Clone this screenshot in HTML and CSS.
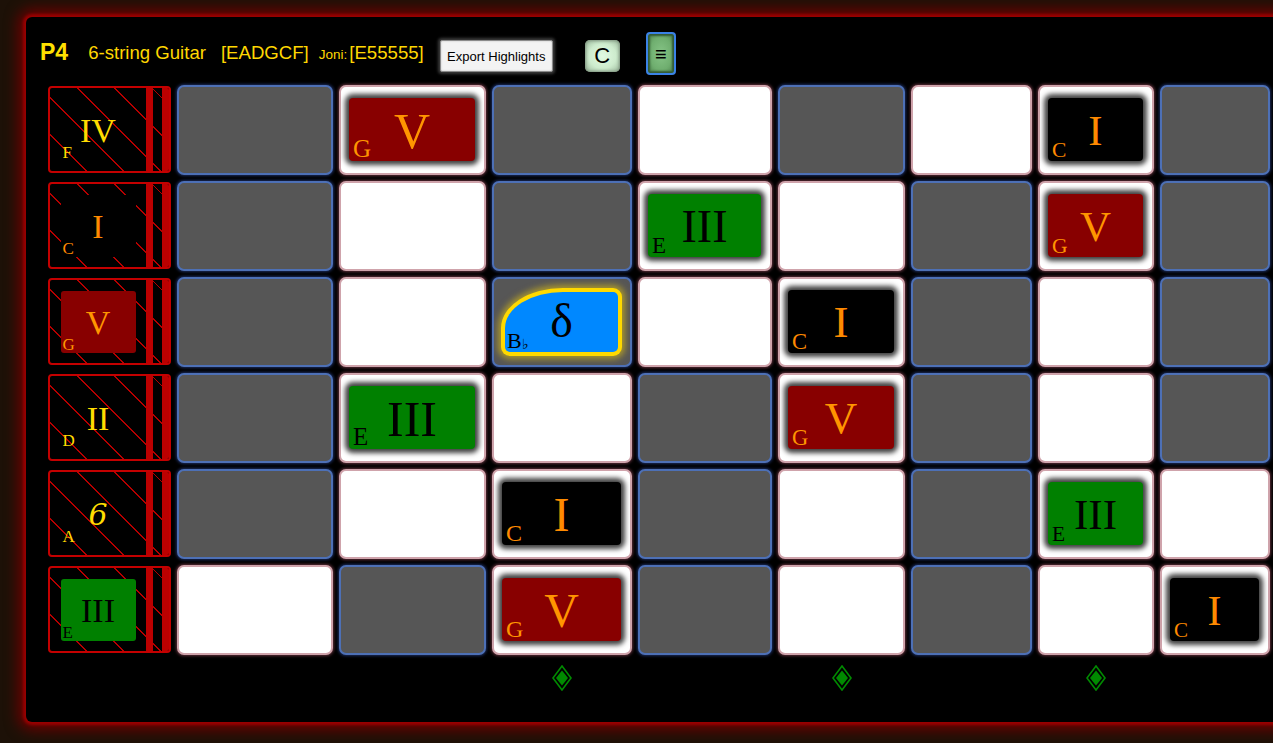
FILE: index.html
```html
<!DOCTYPE html>
<html>
<head>
<meta charset="utf-8">
<link rel="stylesheet" href="styles.css">
</head>
<body>
<div class="panel">
  <div class="header">
    <span class="title">P4</span>
    <span class="h-text inst">6-string Guitar</span>
    <span class="h-text tuning">[EADGCF]</span>
    <span class="h-text joni"><small>Joni:</small>[E55555]</span>
    <button class="export">Export Highlights</button>
    <button class="key">C</button>
    <button class="menu">&#8801;</button>
  </div>

  <div class="board">
    <!-- string 1 -->
    <div class="string">
      <div class="label"><div class="lslot"><div class="lchip yellow"><span class="num">IV</span><span class="note">F</span></div></div><i class="bar"></i><i class="gap"></i><i class="bar last"></i></div>
      <div class="cell g"></div>
      <div class="cell w"><div class="chip red"><span class="num">V</span><span class="note">G</span></div></div>
      <div class="cell g"></div>
      <div class="cell w"></div>
      <div class="cell g"></div>
      <div class="cell w"></div>
      <div class="cell w"><div class="chip black"><span class="num">I</span><span class="note">C</span></div></div>
      <div class="cell g"></div>
    </div>
    <!-- string 2 -->
    <div class="string">
      <div class="label"><div class="lslot"><div class="lchip black"><span class="num">I</span><span class="note">C</span></div></div><i class="bar"></i><i class="gap"></i><i class="bar last"></i></div>
      <div class="cell g"></div>
      <div class="cell w"></div>
      <div class="cell g"></div>
      <div class="cell w"><div class="chip green"><span class="num">III</span><span class="note">E</span></div></div>
      <div class="cell w"></div>
      <div class="cell g"></div>
      <div class="cell w"><div class="chip red"><span class="num">V</span><span class="note">G</span></div></div>
      <div class="cell g"></div>
    </div>
    <!-- string 3 -->
    <div class="string">
      <div class="label"><div class="lslot"><div class="lchip red"><span class="num">V</span><span class="note">G</span></div></div><i class="bar"></i><i class="gap"></i><i class="bar last"></i></div>
      <div class="cell g"></div>
      <div class="cell w"></div>
      <div class="cell g"><div class="chip blue"><span class="num delta">&#948;</span><span class="note">B<sub>&#9837;</sub></span></div></div>
      <div class="cell w"></div>
      <div class="cell w"><div class="chip black"><span class="num">I</span><span class="note">C</span></div></div>
      <div class="cell g"></div>
      <div class="cell w"></div>
      <div class="cell g"></div>
    </div>
    <!-- string 4 -->
    <div class="string">
      <div class="label"><div class="lslot"><div class="lchip yellow"><span class="num">II</span><span class="note">D</span></div></div><i class="bar"></i><i class="gap"></i><i class="bar last"></i></div>
      <div class="cell g"></div>
      <div class="cell w"><div class="chip green"><span class="num">III</span><span class="note">E</span></div></div>
      <div class="cell w"></div>
      <div class="cell g"></div>
      <div class="cell w"><div class="chip red"><span class="num">V</span><span class="note">G</span></div></div>
      <div class="cell g"></div>
      <div class="cell w"></div>
      <div class="cell g"></div>
    </div>
    <!-- string 5 -->
    <div class="string">
      <div class="label"><div class="lslot"><div class="lchip yellow"><span class="num six">6</span><span class="note">A</span></div></div><i class="bar"></i><i class="gap"></i><i class="bar last"></i></div>
      <div class="cell g"></div>
      <div class="cell w"></div>
      <div class="cell w"><div class="chip black"><span class="num">I</span><span class="note">C</span></div></div>
      <div class="cell g"></div>
      <div class="cell w"></div>
      <div class="cell g"></div>
      <div class="cell w"><div class="chip green"><span class="num">III</span><span class="note">E</span></div></div>
      <div class="cell w"></div>
    </div>
    <!-- string 6 -->
    <div class="string">
      <div class="label"><div class="lslot"><div class="lchip green"><span class="num">III</span><span class="note">E</span></div></div><i class="bar"></i><i class="gap"></i><i class="bar last"></i></div>
      <div class="cell w"></div>
      <div class="cell g"></div>
      <div class="cell w"><div class="chip red"><span class="num">V</span><span class="note">G</span></div></div>
      <div class="cell g"></div>
      <div class="cell w"></div>
      <div class="cell g"></div>
      <div class="cell w"></div>
      <div class="cell w"><div class="chip black"><span class="num">I</span><span class="note">C</span></div></div>
    </div>
    <!-- fret markers -->
    <div class="string markers">
      <div class="spacer"></div>
      <div class="mk"></div>
      <div class="mk"></div>
      <div class="mk"><svg width="20" height="26" viewBox="0 0 20 26"><polygon points="10,1 19,13 10,25 1,13" fill="none" stroke="#008a00" stroke-width="1.6"/><polygon points="10,5.5 16,13 10,20.5 4,13" fill="#008a00"/></svg></div>
      <div class="mk"></div>
      <div class="mk"><svg width="20" height="26" viewBox="0 0 20 26"><polygon points="10,1 19,13 10,25 1,13" fill="none" stroke="#008a00" stroke-width="1.6"/><polygon points="10,5.5 16,13 10,20.5 4,13" fill="#008a00"/></svg></div>
      <div class="mk"></div>
      <div class="mk"><svg width="20" height="26" viewBox="0 0 20 26"><polygon points="10,1 19,13 10,25 1,13" fill="none" stroke="#008a00" stroke-width="1.6"/><polygon points="10,5.5 16,13 10,20.5 4,13" fill="#008a00"/></svg></div>
      <div class="mk"></div>
    </div>
  </div>
</div>
</body>
</html>
```

FILE: styles.css
```css
html, body {
  margin: 0;
  padding: 0;
}
body {
  width: 1273px;
  height: 743px;
  overflow: hidden;
  background: #1d1107;
  font-family: "Liberation Sans", Arial, sans-serif;
}
.panel {
  margin: 17px 0 0 26px;
  width: 1300px;
  height: 705px;
  box-sizing: border-box;
  padding: 15px 0 0 14px;
  background: #000;
  border-radius: 6px;
  box-shadow: 0 0 3px 3px #9a0000, 0 0 14px 8px #6a0000;
}

/* header */
.header {
  display: flex;
  align-items: center;
  height: 44px;
}
.title {
  color: #ffe000;
  font-weight: bold;
  font-size: 23px;
  margin-top: -3px;
}
.h-text {
  color: #ffd700;
  font-size: 18.6px;
  margin-top: -2px;
}
.inst { margin-left: 20px; }
.tuning { margin-left: 15px; }
.joni { margin-left: 10px; }
.joni small {
  font-size: 13.5px;
  margin-right: 2px;
}
button {
  font-family: "Liberation Sans", Arial, sans-serif;
  padding: 0;
  cursor: pointer;
}
.export {
  margin-left: 16px;
  margin-top: 4px;
  width: 113px;
  height: 32px;
  background: #f3f3f3;
  border: 1px solid #8a8a8a;
  border-radius: 2px;
  box-shadow: 0 0 3px 2px #3a3a3a, inset 0 0 2px #bbb;
  font-size: 13px;
  color: #000;
}
.key {
  margin-left: 32px;
  margin-top: 4px;
  width: 35px;
  height: 32px;
  border: none;
  border-radius: 5px;
  background: radial-gradient(ellipse at center, #e2fbe2 0%, #cdebcd 55%, #9ab69a 100%);
  box-shadow: inset 0 0 3px 1px #7d927d;
  font-size: 22px;
  color: #000;
}
.menu {
  margin-left: 26px;
  margin-top: -1px;
  width: 30px;
  height: 43px;
  border: 2px solid #3b82e6;
  border-radius: 4px;
  background: radial-gradient(ellipse at center, #86c486 0%, #6fae6f 60%, #4f844f 100%);
  box-shadow: inset 0 0 2px 2px #335a33;
  font-size: 20px;
  line-height: 1;
  color: #000;
}

/* board */
.board {
  margin: 9px 0 0 8px;
  display: flex;
  flex-direction: column;
  gap: 6px;
}
.string {
  display: flex;
  gap: 6px;
  height: 90px;
  align-items: center;
}
.string > :nth-child(2) { width: 156px; --fs: 51px; }
.string > :nth-child(3) { width: 147px; --fs: 50px; }
.string > :nth-child(4) { width: 140px; --fs: 48px; }
.string > :nth-child(5) { width: 134px; --fs: 46px; }
.string > :nth-child(6) { width: 127px; --fs: 45px; }
.string > :nth-child(7) { width: 121px; --fs: 44px; }
.string > :nth-child(8) { width: 116px; --fs: 43px; }
.string > :nth-child(9) { width: 110px; --fs: 42px; }

.cell {
  box-sizing: border-box;
  height: 90px;
  border-radius: 7px;
  border: 2px solid;
  display: flex;
  padding: 11px 9px 12px 8px;
  flex: none;
}
.cell.g {
  background: #565656;
  border-color: #4d70b6;
  box-shadow: 0 0 3px 1px #1c2c5c;
}
.cell.w {
  background: #fff;
  border-color: #cfa3ab;
  box-shadow: 0 0 3px 1px #5c2e38;
}

.chip {
  flex: 1;
  display: grid;
  border-radius: 4px;
  box-shadow: 0 0 5px 4px rgba(0, 0, 0, 0.75);
  font-family: "Liberation Serif", "Times New Roman", serif;
  color: #ff9500;
}
.chip > span,
.lchip > span {
  grid-area: 1 / 1;
}
.num {
  place-self: center;
  font-size: var(--fs);
  line-height: 1;
  margin-top: 2px;
}
.note {
  align-self: end;
  justify-self: start;
  font-size: calc(var(--fs) * 0.5);
  line-height: 1;
  margin: 0 0 0 4px;
}
.red { background: #880000; color: #ff9500; }
.black { background: #000; color: #ff8a00; }
.green { background: #008000; color: #000; }
.yellow { color: #ffdc00; }

.chip.blue {
  background: #0088ff;
  color: #000;
  border-radius: 58px 5px 5px 5px / 36px 5px 5px 5px;
  box-shadow: 0 0 0 4px #ffd900, 0 0 6px 7px rgba(255, 217, 0, 0.5);
  margin: 2px 3px 1px 3px;
}
.delta {
  font-family: "Liberation Serif", serif;
  font-size: 48px;
  margin-top: -2px;
}
.chip.blue .note {
  font-size: 22px;
  margin-left: 2px;
}
.chip.blue sub {
  font-size: 14px;
  vertical-align: -1px;
}

/* string labels */
.label {
  width: 123px;
  height: 87px;
  box-sizing: border-box;
  border: 2px solid #c40000;
  border-radius: 4px;
  display: flex;
  flex: none;
  margin-top: -1px;
  background: repeating-linear-gradient(45deg, transparent 0 25px, #b50000 25px 26.3px);
}
.lslot {
  width: 96px;
  display: flex;
  align-items: center;
  justify-content: center;
}
.lchip {
  width: 75px;
  height: 62px;
  display: grid;
  border-radius: 3px;
  font-family: "Liberation Serif", "Times New Roman", serif;
  --fs: 34px;
}
.lchip .note {
  margin-left: 2px;
}
.lchip.black { color: #ff8a00; }
.lchip .six {
  font-family: "DejaVu Serif", serif;
  font-style: italic;
  font-size: 30px;
}
.bar {
  width: 7px;
  background: #bb0000;
}
.bar.last {
  border-radius: 0 2px 2px 0;
}
.gap {
  width: 9px;
}

/* fret markers */
.markers {
  height: 34px;
}
.markers .spacer {
  width: 123px;
  flex: none;
}
.mk {
  height: 34px;
  display: flex;
  align-items: center;
  justify-content: center;
  flex: none;
}
```
